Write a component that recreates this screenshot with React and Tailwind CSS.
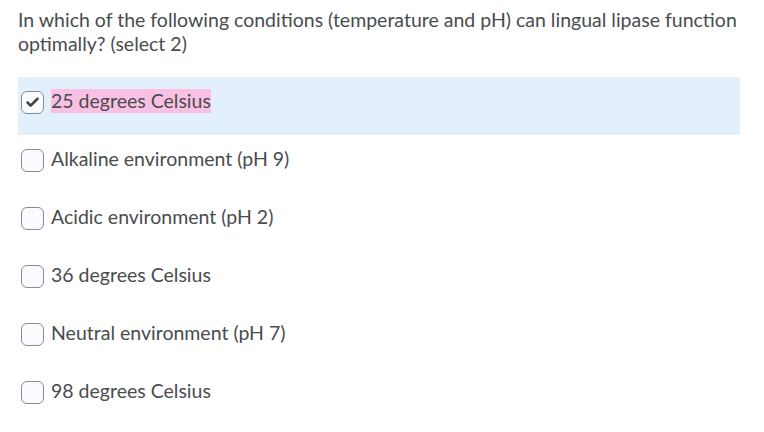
import { Check } from 'lucide-react'

const options = [
  { label: '25 degrees Celsius', checked: true },
  { label: 'Alkaline environment (pH 9)' },
  { label: 'Acidic environment (pH 2)' },
  { label: '36 degrees Celsius' },
  { label: 'Neutral environment (pH 7)' },
  { label: '98 degrees Celsius' },
]

export default function App() {
  return (
    <div className="min-h-[432px] bg-white text-[#494c4e] font-['Lato','Liberation_Sans',sans-serif] pl-[18px] pt-2">
      <p className="text-[19.5px] leading-6 w-[730px]">
        In which of the following conditions (temperature and pH) can lingual lipase function optimally? (select 2)
      </p>
      <div className="mt-[21px] w-[722px]">
        {options.map((opt, i) => (
          <div
            key={i}
            className={`flex items-start h-[58px] pl-[3px] pt-[12px] ${opt.checked ? 'bg-[#e3f0fc]' : ''}`}
          >
            <span className="mt-[2px] flex items-center justify-center w-[23px] h-[23px] rounded-[6px] border border-[#868c8f] bg-[#f9fbff]">
              {opt.checked && <Check className="w-[15px] h-[15px] text-[#3f4244]" strokeWidth={4} />}
            </span>
            <span className={`ml-[7px] text-[19.5px] leading-6 ${opt.checked ? 'bg-[#f8c1e3]' : ''}`}>
              {opt.label}
            </span>
          </div>
        ))}
      </div>
    </div>
  )
}
